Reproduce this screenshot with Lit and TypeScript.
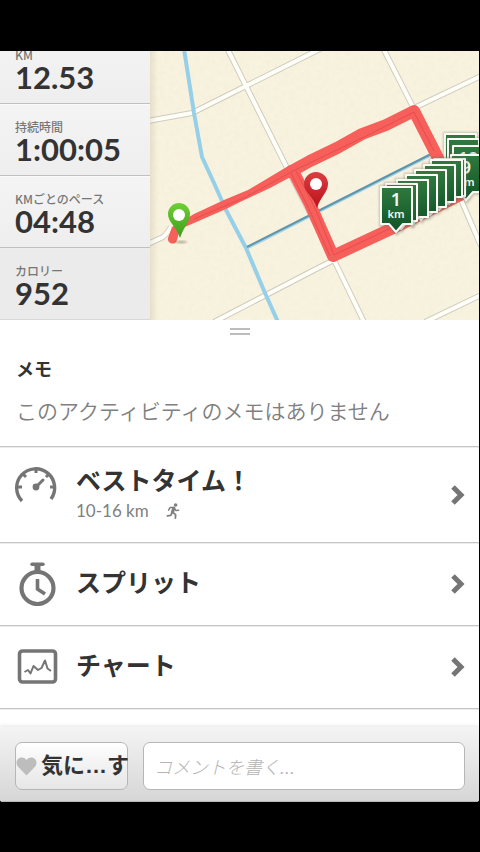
import { LitElement, html, svg, css } from "lit";
import { customElement, property } from "lit/decorators.js";

const stats = [
  { label: "KM", value: "12.53" },
  { label: "持続時間", value: "1:00:05" },
  { label: "KMごとのペース", value: "04:48" },
  { label: "カロリー", value: "952" },
];

// Kilometre signs, listed from the rearmost to the front one.
// Only signs whose face can be seen carry a label.
const signs = [
  { num: "", unit: "", x: 294, y: 82 },
  { num: "", unit: "", x: 297, y: 87 },
  { num: "10", unit: "", x: 302, y: 94 },
  { num: "9", unit: "km", x: 300, y: 103 },
  { num: "", unit: "", x: 283, y: 107 },
  { num: "", unit: "", x: 280, y: 108 },
  { num: "", unit: "", x: 273, y: 113 },
  { num: "", unit: "", x: 264, y: 118 },
  { num: "", unit: "", x: 255, y: 123 },
  { num: "", unit: "", x: 246, y: 128 },
  { num: "", unit: "", x: 235, y: 132 },
  { num: "1", unit: "km", x: 230, y: 135 },
];

const roads = [
  "M-2 70 L42 62 L96 35 L172 -3",
  "M77 -3 L96 35 L137 117 L184 209 L214 271",
  "M233 -3 L262 54 L312 151 L331 195",
  "M262 58 L331 25",
  "M64 271 L170 216 L184 209",
  "M275 271 L331 244",
  "M-2 193 L13 186 Q18 182 21 176",
];

@customElement("stat-list")
class StatList extends LitElement {
  static styles = css`
    :host {
      display: flex;
      flex-direction: column;
      justify-content: flex-end;
      overflow: hidden;
      background: linear-gradient(#f5f5f5, #e9e9e9);
    }
    dl {
      margin: 0;
    }
    .stat {
      box-sizing: border-box;
      height: 72px;
      padding: 14px 15px 0;
      border-top: 1px solid #fafafa;
      border-bottom: 1px solid #c0c0c0;
      background: linear-gradient(#f4f4f4, #eeeeee);
    }
    .stat:last-child {
      border-top-color: #ededed;
      border-bottom-color: #d8d8d8;
      background: #ebebeb;
    }
    dt {
      font-family: "Noto Sans CJK JP", sans-serif;
      font-size: 12px;
      line-height: 16px;
      font-weight: 500;
      color: #777;
      white-space: nowrap;
    }
    dd {
      margin: 0;
      font-size: 31px;
      line-height: 28px;
      font-weight: 700;
      color: #333;
    }
  `;
  render() {
    return html`<dl>
      ${stats.map(
        (s) => html`<div class="stat"><dt>${s.label}</dt><dd>${s.value}</dd></div>`
      )}
    </dl>`;
  }
}

@customElement("route-map")
class RouteMap extends LitElement {
  static styles = css`
    :host {
      display: block;
      overflow: hidden;
      background: #f6f0dc;
    }
    svg {
      display: block;
      width: 100%;
      height: 100%;
    }
    .casing, .road, .river, .canal, .route, .seam {
      fill: none;
      stroke-linejoin: round;
    }
    .casing { stroke: #cfccbd; stroke-width: 6px; }
    .road { stroke: #fffef9; stroke-width: 4px; }
    .river { stroke: #96cfe8; stroke-width: 4px; }
    .canal { stroke: #a4d3e5; stroke-width: 3px; }
    .canal.core { stroke: #5f95ab; stroke-width: 2px; }
    .route { stroke: #f65f5a; stroke-width: 12px; stroke-linecap: round; }
    .taper { fill: #f65f5a; }
    .seam { stroke: #e04048; stroke-width: 1px; opacity: 0.6; }
    text {
      fill: #f2f7f2;
      font-family: "Noto Sans", Lato, sans-serif;
      font-weight: 600;
      text-anchor: middle;
    }
    .num { font-size: 18px; }
    .unit { font-size: 11px; }
  `;
  render() {
    return html`<svg viewBox="0 0 329 269" preserveAspectRatio="xMidYMid slice" role="img" aria-label="地図">
      <defs>
        <filter id="paper" x="0" y="0" width="100%" height="100%">
          <feTurbulence type="fractalNoise" baseFrequency="0.2" numOctaves="2" seed="4" />
          <feColorMatrix values="0 0 0 0 0.75  0 0 0 0 0.66  0 0 0 0 0.42  0.5 0 0 0 -0.16" />
        </filter>
        <filter id="soft" x="-50%" y="-50%" width="200%" height="200%">
          <feGaussianBlur stdDeviation="1" />
        </filter>
        <linearGradient id="sign" x1="0" y1="0" x2="0" y2="1">
          <stop offset="0" stop-color="#2f7a3e" />
          <stop offset="1" stop-color="#0f5327" />
        </linearGradient>
        <linearGradient id="green" x1="0" y1="0" x2="0" y2="1">
          <stop offset="0" stop-color="#6fd034" />
          <stop offset="1" stop-color="#3b9c1d" />
        </linearGradient>
        <linearGradient id="red" x1="0" y1="0" x2="0" y2="1">
          <stop offset="0" stop-color="#dd3c40" />
          <stop offset="1" stop-color="#b8141c" />
        </linearGradient>
        <linearGradient id="edge">
          <stop offset="0" stop-color="#8a7f5a" stop-opacity="0.16" />
          <stop offset="1" stop-color="#8a7f5a" stop-opacity="0" />
        </linearGradient>
      </defs>
      <rect width="329" height="269" fill="#f8f3e0" />
      <rect width="329" height="269" filter="url(#paper)" opacity="0.4" />
      ${roads.map((d) => svg`<path class="casing" d=${d} />`)}
      ${roads.map((d) => svg`<path class="road" d=${d} />`)}
      <path class="river" d="M34 -2 L44 62 L52 106 L64 132 L76 159 L96 197 L115 242 L128 271" />
      <path class="canal" d="M97 197 L170 160 L283 103" />
      <path class="canal core" d="M97 196 L170 159 L283 102" />
      <path class="taper" d="M18 187 L22 176 L44 163 L74 149 L98 139 L140 114 L150 121 L120 137 L90 151 L76 158 L44 172 L30 178 L27 189 A4.6 4.6 0 0 1 18 187 Z" />
      <path class="route" d="M140 121 L160 110 L187 97 L212 83 L236 74 L264 60 L288 107" />
      <path class="route" d="M143 120 L160 153 L183 205 L243 177 L310 144" />
      <path class="seam" d="M44 168 L96 146 L143 120 L212 87 L264 61 L284 100" />
      <path class="seam" d="M146 120 L165 157 L184 204 L243 176" />
      <path class="seam" d="M141 122 L159 158 L180 205" />
      <ellipse cx="31" cy="191" rx="6" ry="1" fill="#6b6552" opacity="0.6" filter="url(#soft)" />
      <path d="M29 152 a11 11 0 0 1 11 11 c0 8 -6 12 -10 24 c-4 -12 -12 -16 -12 -24 a11 11 0 0 1 11 -11z" fill="url(#green)" />
      <circle cx="29" cy="164" r="6" fill="#fff" />
      <path d="M166 121 a12 12 0 0 1 12 12 c0 8 -7 12 -11 24 c-4 -12 -13 -16 -13 -24 a12 12 0 0 1 12 -12z" fill="url(#red)" />
      <circle cx="166" cy="133" r="6" fill="#fff" />
      ${signs.map(
        (s) => svg`<g transform="translate(${s.x} ${s.y})">
          <path d="M1 1 H32 V39 H23 L17 47 L10 39 H1 Z" fill="none" stroke="#6d6d5c" stroke-width="4" opacity="0.35" filter="url(#soft)" />
          <path d="M1 1 H32 V38 H23 L16 46 L9 38 H1 Z" fill="url(#sign)" stroke="#fdfdf8" stroke-width="2" stroke-linejoin="round" />
          ${s.num ? svg`<text class="num" x="16" y="20">${s.num}</text>` : ""}
          ${s.unit ? svg`<text class="unit" x="16" y="32">${s.unit}</text>` : ""}
        </g>`
      )}
      <rect width="8" height="269" fill="url(#edge)" />
    </svg>`;
  }
}

const gauge = html`<svg width="44" height="38" viewBox="0 0 44 38" fill="none" stroke="#757575" aria-hidden="true">
  <path d="M8 36 A19 19 0 1 1 37 34" stroke-width="3.4" />
  <path d="M22 3 V8 M3 22 H8 M36 22 H42 M9 9 L12 12 M35 9 L32 12" stroke-width="3" />
  <path d="M22 22 L29 15" stroke-width="3" stroke-linecap="round" />
  <circle cx="22" cy="22" r="3.4" fill="#757575" stroke="none" />
</svg>`;

const stopwatch = html`<svg width="44" height="44" viewBox="0 0 44 44" fill="none" stroke="#757575" aria-hidden="true">
  <circle cx="23.5" cy="26" r="16" stroke-width="4.2" />
  <path d="M18 2.2 H29" stroke-width="3.4" stroke-linecap="round" />
  <path d="M23.5 3 V9" stroke-width="6" />
  <path d="M23.5 17 V27 L31 32" stroke-width="3.6" />
</svg>`;

const chart = html`<svg width="44" height="36" viewBox="0 0 44 36" fill="none" stroke="#757575" stroke-linejoin="round" aria-hidden="true">
  <rect x="5.5" y="2" width="36" height="31" rx="3" stroke-width="3.6" />
  <path d="M10.500 23 L14 21 L16.500 24.500 L19.500 17 L24 21 L27.500 19 L31 11.500 L33.500 19.500 L37 22" stroke-width="2" />
</svg>`;

const runner = html`<svg width="15" height="16" viewBox="0 0 15 16" fill="none" stroke="#808080" stroke-linecap="round" stroke-linejoin="round" aria-hidden="true">
  <circle cx="9.6" cy="2" r="1.8" fill="#808080" stroke="none" />
  <path d="M7.8 5.200 L6.400 9.200" stroke-width="3.200" />
  <path d="M7.400 4.400 L4 4.600 L2.600 7.200 M8.600 5.600 L10 7.600 L12.600 7.200" stroke-width="1.500" />
  <path d="M7.200 9.600 L9.600 11.600 L9.400 15 M6 9.800 L4.800 12.400 L1.400 12.800" stroke-width="1.800" />
</svg>`;

@customElement("link-row")
class LinkRow extends LitElement {
  @property() heading = "";
  @property() detail = "";
  @property({ attribute: false }) icon: unknown;

  static styles = css`
    :host {
      display: block;
      border-bottom: 1px solid #c4c4c4;
      box-shadow: 0 1px #ececec;
    }
    a {
      display: flex;
      align-items: center;
      gap: 16px;
      min-height: 82px;
      padding: 0 14px;
      color: #333;
      text-decoration: none;
    }
    a.tall {
      min-height: 95px;
    }
    .icon, .icon svg, .chevron, .chevron svg, .mark svg {
      display: block;
    }
    .icon {
      flex: none;
      width: 46px;
    }
    .tall .icon {
      padding-bottom: 22px;
    }
    .body {
      flex: 1;
      min-width: 0;
      padding-bottom: 4px;
    }
    .heading {
      display: block;
      font-size: 25px;
      line-height: 36px;
      font-weight: 700;
    }
    .detail {
      display: flex;
      align-items: center;
      gap: 17px;
      font-size: 17px;
      line-height: 26px;
      color: #808080;
    }
  `;
  render() {
    return html`<a href="#" class=${this.detail ? "tall" : ""}>
      <span class="icon">${this.icon}</span>
      <span class="body">
        <span class="heading">${this.heading}</span>
        ${this.detail
          ? html`<span class="detail">${this.detail}<span class="mark">${runner}</span></span>`
          : ""}
      </span>
      <span class="chevron"><svg width="14" height="20" viewBox="0 0 14 20" aria-hidden="true">
        <path d="M2 2 L10 10 L2 18" fill="none" stroke="#757575" stroke-width="5" />
      </svg></span>
    </a>`;
  }
}

@customElement("app-root")
class AppRoot extends LitElement {
  static styles = css`
    :host {
      display: flex;
      flex-direction: column;
      box-sizing: border-box;
      min-height: 100vh;
      padding: 51px 0 50px;
      background: #000;
      font-family: Lato, "Noto Sans CJK JP", sans-serif;
      color: #333;
    }
    main {
      flex: 1;
      display: flex;
      flex-direction: column;
      margin-right: 1px;
      border-radius: 0 0 3px 3px;
      overflow: hidden;
      background: #fff;
    }
    .summary {
      display: grid;
      grid-template-columns: 150px 1fr;
      height: 269px;
    }
    .handle {
      display: flex;
      flex-direction: column;
      align-items: center;
      gap: 3px;
      padding-top: 8px;
    }
    .handle i {
      width: 20px;
      height: 2px;
      background: #bdbdbd;
    }
    .memo {
      padding: 20px 16px 19px;
      border-bottom: 1px solid #c4c4c4;
      box-shadow: 0 1px #ececec;
    }
    h2 {
      margin: 0 0 12px;
      font-size: 18px;
      line-height: 28px;
      font-weight: 700;
    }
    p {
      margin: 0;
      font-size: 21px;
      line-height: 32px;
      font-weight: 350;
      color: #808080;
    }
    footer {
      display: flex;
      gap: 15px;
      margin-top: auto;
      padding: 15px 14px 11px 15px;
      border-bottom: 1px solid #b8b8b8;
      background: linear-gradient(#f4f4f4, #d6d6d6);
      box-shadow: 0 -1px 4px #e4e4e4;
    }
    button, input {
      box-sizing: border-box;
      height: 48px;
      border: 1px solid #b6b6b6;
      border-radius: 7px;
      margin: 0;
    }
    button {
      display: flex;
      align-items: center;
      gap: 4px;
      width: 113px;
      padding: 0;
      flex: none;
      background: linear-gradient(#fefefe, #e6e6e6);
      font: 700 22px/32px "Liberation Sans", "Noto Sans CJK JP", sans-serif;
      color: #333;
      white-space: nowrap;
    }
    button svg {
      display: block;
      flex: none;
    }
    input {
      flex: 1;
      min-width: 0;
      padding: 4px 10px 0;
      background: #fff;
      font: italic 300 18px/28px "Liberation Sans", "Noto Sans CJK JP", sans-serif;
      color: #333;
    }
    input::placeholder {
      color: #b4b4b4;
      opacity: 1;
    }
  `;
  render() {
    return html`<main>
      <section class="summary">
        <stat-list></stat-list>
        <route-map></route-map>
      </section>
      <div class="handle"><i></i><i></i></div>
      <section class="memo">
        <h2>メモ</h2>
        <p>このアクティビティのメモはありません</p>
      </section>
      <nav>
        <link-row heading="ベストタイム！" detail="10-16 km" .icon=${gauge}></link-row>
        <link-row heading="スプリット" .icon=${stopwatch}></link-row>
        <link-row heading="チャート" .icon=${chart}></link-row>
      </nav>
      <footer>
        <button type="button"><svg width="21" height="20" viewBox="0 0 21 20" aria-hidden="true">
            <path d="M10.500 19.500 L1.800 10.400 C-2.600 5 4.800 -2.400 10.500 4 C16.200 -2.400 23.600 5 19.200 10.400 Z" fill="#bdbdbd" />
          </svg><span>気に…す</span></button>
        <input type="text" aria-label="コメント" placeholder="コメントを書く..." />
      </footer>
    </main>`;
  }
}
